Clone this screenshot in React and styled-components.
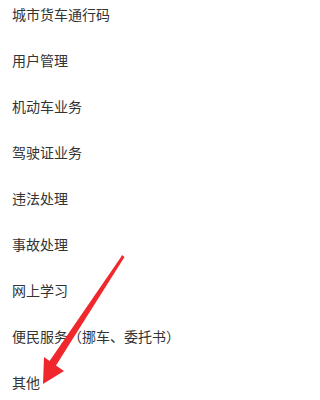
import React from "react";
import styled, { createGlobalStyle } from "styled-components";

const GlobalStyle = createGlobalStyle`
  body {
    margin: 0;
    background: #fff;
    font-family: "Noto Sans CJK SC", "Noto Sans", sans-serif;
  }
`;

const Page = styled.div`
  position: relative;
  width: 300px;
  height: 400px;
  overflow: hidden;
  background: #fff;
`;

const MenuList = styled.ul`
  list-style: none;
  margin: -9px 0 0;
  padding: 0;
`;

const MenuItem = styled.li`
  height: 46px;
  display: flex;
  align-items: center;
  padding-left: 12px;
  font-size: 14px;
  color: #333;
`;

const Arrow = styled.svg`
  position: absolute;
  left: 0;
  top: 0;
  pointer-events: none;
`;

const items = [
  "城市货车通行码",
  "用户管理",
  "机动车业务",
  "驾驶证业务",
  "违法处理",
  "事故处理",
  "网上学习",
  "便民服务（挪车、委托书）",
  "其他",
];

const App = () => (
  <Page>
    <GlobalStyle />
    <MenuList>
      {items.map((item) => (
        <MenuItem key={item}>{item}</MenuItem>
      ))}
    </MenuList>
    <Arrow width="300" height="400" viewBox="0 0 300 400">
      <path
        d="M122 255 L124.5 257 L72 340 L56 365.5 L64 371 L43 384 L44 357 L49.6 361 L64 340 L121 257 Z"
        fill="#f0282d"
      />
    </Arrow>
  </Page>
);

export default App;
